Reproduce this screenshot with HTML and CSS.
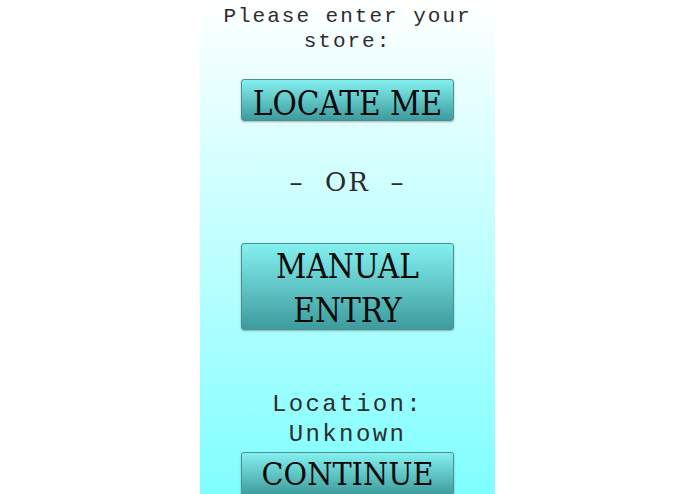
FILE: index.html
```html
<!DOCTYPE html>
<html>
<head>
<meta charset="utf-8">
<link rel="stylesheet" href="styles.css">
</head>
<body>
<div class="panel">
  <p class="prompt">Please enter your store:</p>
  <button class="btn btn-locate">LOCATE ME</button>
  <p class="or">–&nbsp;&nbsp;OR&nbsp;&nbsp;–</p>
  <button class="btn btn-manual">MANUAL<br>ENTRY</button>
  <p class="location">Location:<br>Unknown</p>
  <button class="btn btn-continue">CONTINUE</button>
</div>
</body>
</html>
```
FILE: styles.css
```css
html, body {
  margin: 0;
  padding: 0;
  background: #ffffff;
  height: 100%;
  overflow: hidden;
}
.panel {
  width: 295px;
  margin: 0 auto;
  min-height: 494px;
  background: linear-gradient(to bottom, #ffffff 0%, #7ffeff 100%);
  display: flex;
  flex-direction: column;
  align-items: center;
  padding-top: 4px;
  box-sizing: border-box;
}
.prompt {
  margin: 0;
  width: 270px;
  font-family: "Liberation Mono", "Courier New", monospace;
  font-size: 21px;
  line-height: 25px;
  letter-spacing: 2px;
  text-align: center;
  color: #2c2c2c;
}
.btn {
  width: 213px;
  border: 1px solid #4f8f90;
  border-radius: 3px;
  background: linear-gradient(to bottom, #84f0f0 0%, #3d9b9c 100%);
  box-shadow: 0 1px 2px rgba(0, 0, 0, 0.3);
  font-family: "DejaVu Serif Condensed", "DejaVu Serif", serif;
  font-stretch: condensed;
  font-size: 33px;
  line-height: 40px;
  color: #0a0a0a;
  padding: 4px 0 0;
  text-align: center;
}
.btn-locate {
  margin-top: 25px;
  height: 42px;
}
.or {
  margin: 46px 0 0;
  font-family: "DejaVu Serif", serif;
  font-weight: 300;
  font-size: 26px;
  line-height: 30px;
  letter-spacing: 2px;
  color: #2a2a2a;
}
.btn-manual {
  margin-top: 46px;
  height: 87px;
  line-height: 44px;
  padding-top: 1px;
}
.location {
  margin: 60px 0 0;
  font-family: "Liberation Mono", "Courier New", monospace;
  font-size: 24px;
  line-height: 30px;
  letter-spacing: 2.4px;
  text-align: center;
  color: #2c2c2c;
}
.btn-continue {
  margin-top: 2px;
  height: 44px;
  font-size: 32px;
  padding-top: 0;
}
```
